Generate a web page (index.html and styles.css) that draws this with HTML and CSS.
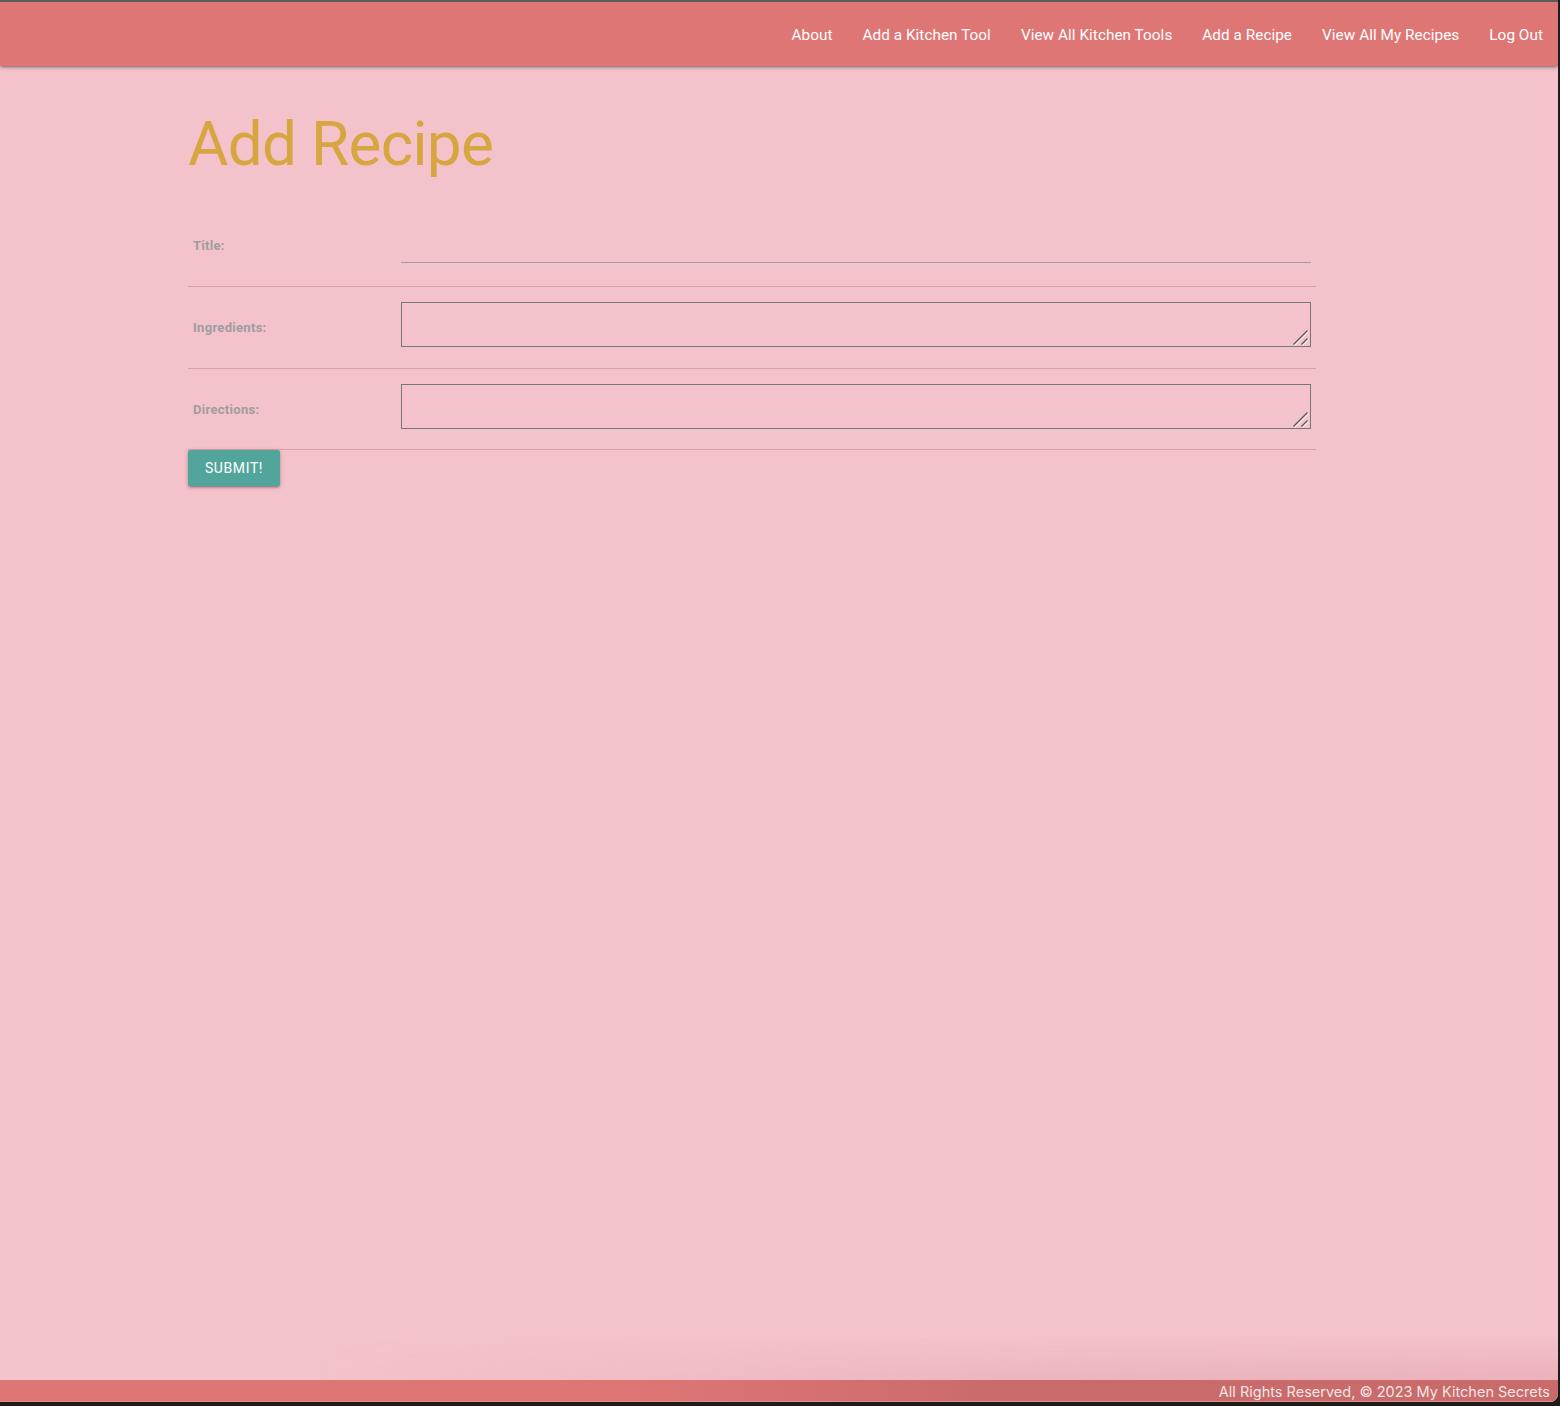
FILE: index.html
```html
<!DOCTYPE html>
<html lang="en">
<head>
<meta charset="utf-8">
<title>Add Recipe</title>
<link rel="stylesheet" href="styles.css">
</head>
<body>
<div class="window">
  <div class="frame-top"></div>
  <div class="page">
    <nav class="navbar">
      <ul class="nav-links">
        <li><a href="#">About</a></li>
        <li><a href="#">Add a Kitchen Tool</a></li>
        <li><a href="#">View All Kitchen Tools</a></li>
        <li><a href="#">Add a Recipe</a></li>
        <li><a href="#">View All My Recipes</a></li>
        <li><a href="#">Log Out</a></li>
      </ul>
    </nav>
    <main class="content">
      <h1 class="page-title">Add Recipe</h1>
      <form class="recipe-form">
        <table class="form-table">
          <tr class="row row-title">
            <th class="label-cell"><label for="title">Title:</label></th>
            <td class="field-cell"><input id="title" class="text-input" type="text"></td>
          </tr>
          <tr class="row">
            <th class="label-cell"><label for="ingredients">Ingredients:</label></th>
            <td class="field-cell">
              <div class="area-wrap">
                <textarea id="ingredients" class="text-area"></textarea>
                <svg class="grip" width="16" height="16" viewBox="0 0 16 16" aria-hidden="true">
                  <path d="M1.5 15.5 L15.5 1.5 M9.5 15.5 L15.5 9.5" stroke="#ffffff" stroke-opacity="0.7" stroke-width="1.2" fill="none"/>
                  <path d="M0.5 14.5 L14.5 0.5 M8.5 14.5 L14.5 8.5" stroke="#555555" stroke-width="1.3" fill="none"/>
                </svg>
              </div>
            </td>
          </tr>
          <tr class="row">
            <th class="label-cell"><label for="directions">Directions:</label></th>
            <td class="field-cell">
              <div class="area-wrap area-last">
                <textarea id="directions" class="text-area"></textarea>
                <svg class="grip" width="16" height="16" viewBox="0 0 16 16" aria-hidden="true">
                  <path d="M1.5 15.5 L15.5 1.5 M9.5 15.5 L15.5 9.5" stroke="#ffffff" stroke-opacity="0.7" stroke-width="1.2" fill="none"/>
                  <path d="M0.5 14.5 L14.5 0.5 M8.5 14.5 L14.5 8.5" stroke="#555555" stroke-width="1.3" fill="none"/>
                </svg>
              </div>
            </td>
          </tr>
        </table>
        <button type="button" class="submit-btn">SUBMIT!</button>
      </form>
      <div class="bottom-shade"></div>
    </main>
    <footer class="footer">All Rights Reserved, © 2023 My Kitchen Secrets</footer>
  </div>
  <div class="frame-bottom"></div>
</div>
</body>
</html>
```

FILE: styles.css
```css
* { box-sizing: border-box; }
html, body {
  margin: 0;
  padding: 0;
  width: 1560px;
  height: 1406px;
  overflow: hidden;
  background: #1c1c1c;
  font-family: Roboto, "Liberation Sans", sans-serif;
}
.window {
  display: flex;
  flex-direction: column;
  height: 1406px;
  width: 1560px;
}
.frame-top {
  height: 2px;
  background: #5b5b5b;
  margin-right: 2px;
}
.page {
  flex: 1;
  display: flex;
  flex-direction: column;
  background: #f4c2cb;
  margin-right: 2px;
  border-bottom-right-radius: 8px;
  overflow: hidden;
}
.navbar {
  height: 64px;
  background: #df7676;
  box-shadow: 0 2px 2px 0 rgba(0,0,0,0.14), 0 3px 1px -2px rgba(0,0,0,0.12), 0 1px 5px 0 rgba(0,0,0,0.2);
  display: flex;
  justify-content: flex-end;
  position: relative;
  z-index: 2;
}
.nav-links {
  list-style: none;
  margin: 0;
  padding: 0;
  display: flex;
}
.nav-links a {
  display: block;
  padding: 1px 15px 0;
  line-height: 64px;
  color: #ffffff;
  text-decoration: none;
  font-size: 15.3px;
  letter-spacing: 0.05px;
}
.content {
  flex: 1;
  padding-left: 188px;
  position: relative;
}
.page-title {
  margin: 0;
  padding-top: 40px;
  height: 138px;
  font-family: Roboto, "Liberation Sans", sans-serif;
  font-weight: 400;
  font-size: 62px;
  line-height: 76px;
  letter-spacing: -0.7px;
  color: #d6a740;
}
.recipe-form {
  width: 1128px;
}
.form-table {
  width: 1128px;
  border-collapse: collapse;
}
.row {
  border-bottom: 1px solid #d9a2ab;
}
.label-cell {
  width: 208px;
  padding: 15px 5px;
  text-align: left;
  vertical-align: middle;
  font-size: 13px;
  font-weight: 700;
  letter-spacing: 0.3px;
  color: #9e9e9e;
}
.field-cell {
  padding: 15px 5px;
  vertical-align: middle;
}
.text-input {
  display: block;
  width: 910px;
  height: 44px;
  margin: 0 0 8px 0;
  padding: 0;
  background: transparent;
  border: none;
  border-bottom: 1px solid #9e9e9e;
  outline: none;
  font-size: 16px;
}
.area-wrap {
  position: relative;
  width: 910px;
  height: 45px;
  margin-bottom: 6px;
}
.area-last {
  margin-bottom: 5px;
}
.text-area {
  display: block;
  width: 910px;
  height: 45px;
  margin: 0;
  padding: 2px;
  background: transparent;
  border: 1px solid #767676;
  border-radius: 0;
  outline: none;
  resize: none;
  font-size: 14px;
}
.grip {
  position: absolute;
  left: 892px;
  top: 28px;
  pointer-events: none;
}
.submit-btn {
  margin-top: 0;
  height: 36px;
  width: 92px;
  padding: 0;
  border: none;
  border-radius: 2px;
  background: #52a59b;
  color: #ffffff;
  font-family: Roboto, sans-serif;
  font-size: 14px;
  letter-spacing: 0.6px;
  box-shadow: 0 2px 2px 0 rgba(0,0,0,0.14), 0 3px 1px -2px rgba(0,0,0,0.12), 0 1px 5px 0 rgba(0,0,0,0.2);
  cursor: pointer;
}
.bottom-shade {
  position: absolute;
  left: 0;
  right: 0;
  bottom: 0;
  height: 44px;
  background: linear-gradient(to right, rgba(200,120,130,0) 20%, rgba(200,120,130,0.18) 70%, rgba(200,120,130,0.22) 100%);
  -webkit-mask-image: linear-gradient(to bottom, transparent, black);
  mask-image: linear-gradient(to bottom, transparent, black);
  pointer-events: none;
}
.footer {
  height: 22px;
  background: linear-gradient(to right, #df7676 0%, #df7676 40%, #c96b6b 65%, #c96b6b 100%);
  color: #f3e4e4;
  font-family: Inter, Roboto, sans-serif;
  font-size: 14.5px;
  line-height: 24px;
  text-align: right;
  padding-right: 8px;
  border-bottom: 1px solid #e68a8a;
}
.frame-bottom {
  height: 4px;
  background: #1c1c1c;
}
```
